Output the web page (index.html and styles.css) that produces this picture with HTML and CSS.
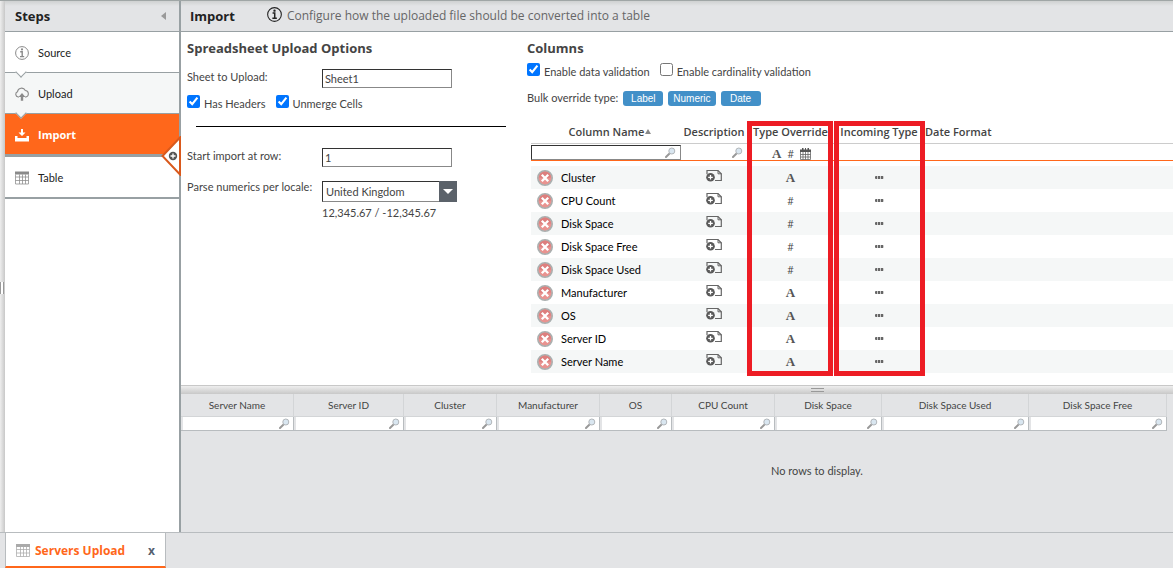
FILE: index.html
```
<!DOCTYPE html>
<html lang="en">
<head>
  <meta charset="UTF-8">
  <title>Servers Upload - Import</title>
  <meta name="viewport" content="width=device-width,initial-scale=1">
  <link rel="stylesheet" href="styles.css">
</head>
<body>
  <!-- shared icons -->
  <svg class="sprite" aria-hidden="true">
    <symbol id="i-info" viewBox="0 0 14 14">
      <circle cx="7" cy="7" r="6.4" fill="none" stroke="currentColor" stroke-width="1"/>
      <path d="M5.2 5.7H7.2V10.4M5 10.6H9.2" fill="none" stroke="currentColor" stroke-width="1.4"/>
      <circle cx="7" cy="3.4" r="1.1" fill="currentColor"/>
    </symbol>
    <symbol id="i-cloud" viewBox="0 0 14 14">
      <path d="M4 10H3.2A2.7 2.7 0 0 1 2.5 4.8A4.1 4.1 0 0 1 10.3 3.5A3.3 3.3 0 0 1 10.8 10H10" fill="none" stroke="currentColor" stroke-width="1.1"/>
      <path d="M7 6L10.4 10H8.2V13.8H5.8V10H3.6Z" fill="currentColor"/>
    </symbol>
    <symbol id="i-import" viewBox="0 0 14 14">
      <path d="M6 1H8V4.5H10.5L7 8L3.5 4.5H6Z" fill="currentColor"/>
      <path d="M0 8H2.5V10H11.5V8H14V13.5H0Z" fill="currentColor"/>
    </symbol>
    <symbol id="i-table" viewBox="0 0 14 13">
      <path d="M0 0H14V3H0Z" fill="currentColor"/>
      <path d="M.5 3V12.5H13.5V3M.5 5.5H13.5M.5 9H13.5M4.5 3V12.5M7.5 3V12.5M10.5 3V12.5" fill="none" stroke="currentColor" stroke-width="1" opacity=".75"/>
    </symbol>
    <symbol id="i-search" viewBox="0 0 11 11">
      <path d="M1 10L4.8 6.3" stroke="#999" stroke-width="2" stroke-linecap="round"/>
      <circle cx="6.8" cy="4" r="3" fill="#d9e6f0" stroke="#b2b6ba" stroke-width="1"/>
    </symbol>
    <symbol id="i-remove" viewBox="0 0 16 16">
      <circle cx="8" cy="8" r="7.2" fill="#e99390" stroke="#aab0b0" stroke-width="1.6"/>
      <path d="M2 7.5A6 6 0 0 1 14 7.5Q8 9 2 7.5Z" fill="#dd7f7e"/>
      <path d="M4.8 4.8L11.2 11.2M11.2 4.8L4.8 11.2" stroke="#fff" stroke-width="2.3"/>
    </symbol>
    <symbol id="i-note" viewBox="0 0 16 13">
      <path d="M1 5V1.5H12L15.3 4.8V11.5H9" fill="none" stroke="#666" stroke-width="1.2"/>
      <path d="M12 1.5V4.8H15.3" fill="none" stroke="#666" stroke-width="1"/>
      <circle cx="4.5" cy="8.3" r="4.3" fill="#5a5a5a"/>
      <path d="M2.2 8.3H6.8M4.5 6V10.6" stroke="#fff" stroke-width="1.3"/>
    </symbol>
    <symbol id="i-calendar" viewBox="0 0 11 12">
      <path d="M0 1.5H11V4H0ZM2 0H3.5V3H2ZM5 0H6V3H5ZM7.5 0H9V3H7.5Z" fill="#555"/>
      <path d="M.5 4V11.5H10.5V4M.5 6.5H10.5M.5 9H10.5M3 4V11.5M5.5 4V11.5M8 4V11.5" fill="none" stroke="#666" stroke-width=".8"/>
    </symbol>
  </svg>

  <div class="workspace">
    <div class="gutter"><span class="gutter-grip"></span></div>

    <nav class="steps">
      <div class="bar steps-bar">
        <h2>Steps</h2>
        <button class="collapse" aria-label="Collapse steps"></button>
      </div>
      <a class="step notched" href="#source"><svg><use href="#i-info"/></svg>Source</a>
      <a class="step notched visited" href="#upload"><svg><use href="#i-cloud"/></svg>Upload</a>
      <a class="step active" href="#import"><svg><use href="#i-import"/></svg>Import
        <svg class="add-step" viewBox="0 0 20 40">
          <path d="M19 1.5L1.5 20L19 38.5Z" fill="#fff" stroke="#d9591c" stroke-width="2"/>
          <circle cx="12" cy="20" r="4.2" fill="#555"/>
          <path d="M9.5 20H14.5M12 17.5V22.5" stroke="#fff" stroke-width="1.3"/>
        </svg>
      </a>
      <a class="step last" href="#table"><svg><use href="#i-table"/></svg>Table</a>
    </nav>

    <main class="main">
      <header class="bar main-bar">
        <h1>Import</h1>
        <svg class="info"><use href="#i-info"/></svg>
        <p>Configure how the uploaded file should be converted into a table</p>
      </header>

      <div class="panels">
        <section class="options">
          <h3>Spreadsheet Upload Options</h3>
          <div class="field">
            <label for="sheet">Sheet to Upload:</label>
            <input type="text" id="sheet" value="Sheet1">
          </div>
          <div class="checks">
            <input type="checkbox" id="headers" checked><label for="headers">Has Headers</label>
            <input type="checkbox" id="unmerge" checked><label for="unmerge">Unmerge Cells</label>
          </div>
          <hr>
          <div class="field">
            <label for="startRow">Start import at row:</label>
            <input type="text" id="startRow" value="1">
          </div>
          <div class="field locale">
            <label for="locale">Parse numerics per locale:</label>
            <div class="select-box">
              <select id="locale">
                <option>United Kingdom</option>
                <option>United States</option>
              </select>
            </div>
            <p class="sample">12,345.67 / -12,345.67</p>
          </div>
        </section>

        <section class="columns">
          <h3>Columns</h3>
          <div class="checks">
            <input type="checkbox" id="dataVal" checked><label for="dataVal">Enable data validation</label>
            <input type="checkbox" id="cardVal"><label for="cardVal">Enable cardinality validation</label>
          </div>
          <div class="bulk">
            <span>Bulk override type:</span>
            <button>Label</button>
            <button>Numeric</button>
            <button>Date</button>
          </div>

          <div class="table-wrap">
            <table class="column-table">
              <colgroup><col class="c-name"><col class="c-desc"><col class="c-type"><col class="c-incoming"><col></colgroup>
              <thead>
                <tr>
                  <th>Column Name<span class="sort-asc"></span></th>
                  <th>Description</th>
                  <th>Type Override</th>
                  <th>Incoming Type</th>
                  <th class="left">Date Format</th>
                </tr>
                <tr class="filters">
                  <td><div class="filter focus"><input type="text" aria-label="Filter column name"><svg><use href="#i-search"/></svg></div></td>
                  <td><div class="filter"><input type="text" aria-label="Filter description"><svg><use href="#i-search"/></svg></div></td>
                  <td><div class="types"><b>A</b><i>#</i><svg><use href="#i-calendar"/></svg></div></td>
                  <td></td>
                  <td></td>
                </tr>
              </thead>
              <tbody>
                <tr class="spacer"><td colspan="5"></td></tr>
                <tr><td><div class="name"><svg><use href="#i-remove"/></svg>Cluster</div></td><td><svg class="note"><use href="#i-note"/></svg></td><td><b>A</b></td><td class="dots"><span></span></td><td></td></tr>
                <tr><td><div class="name"><svg><use href="#i-remove"/></svg>CPU Count</div></td><td><svg class="note"><use href="#i-note"/></svg></td><td><i>#</i></td><td class="dots"><span></span></td><td></td></tr>
                <tr><td><div class="name"><svg><use href="#i-remove"/></svg>Disk Space</div></td><td><svg class="note"><use href="#i-note"/></svg></td><td><i>#</i></td><td class="dots"><span></span></td><td></td></tr>
                <tr><td><div class="name"><svg><use href="#i-remove"/></svg>Disk Space Free</div></td><td><svg class="note"><use href="#i-note"/></svg></td><td><i>#</i></td><td class="dots"><span></span></td><td></td></tr>
                <tr><td><div class="name"><svg><use href="#i-remove"/></svg>Disk Space Used</div></td><td><svg class="note"><use href="#i-note"/></svg></td><td><i>#</i></td><td class="dots"><span></span></td><td></td></tr>
                <tr><td><div class="name"><svg><use href="#i-remove"/></svg>Manufacturer</div></td><td><svg class="note"><use href="#i-note"/></svg></td><td><b>A</b></td><td class="dots"><span></span></td><td></td></tr>
                <tr><td><div class="name"><svg><use href="#i-remove"/></svg>OS</div></td><td><svg class="note"><use href="#i-note"/></svg></td><td><b>A</b></td><td class="dots"><span></span></td><td></td></tr>
                <tr><td><div class="name"><svg><use href="#i-remove"/></svg>Server ID</div></td><td><svg class="note"><use href="#i-note"/></svg></td><td><b>A</b></td><td class="dots"><span></span></td><td></td></tr>
                <tr><td><div class="name"><svg><use href="#i-remove"/></svg>Server Name</div></td><td><svg class="note"><use href="#i-note"/></svg></td><td><b>A</b></td><td class="dots"><span></span></td><td></td></tr>
              </tbody>
            </table>
            <div class="mark mark-type"></div>
            <div class="mark mark-incoming"></div>
          </div>
        </section>
      </div>

      <div class="splitter"><span></span></div>

      <section class="preview">
        <table class="preview-table">
          <colgroup><col class="w113"><col class="w110"><col class="w93"><col class="w103"><col class="w72"><col class="w103"><col class="w107"><col class="w147"><col class="w138"></colgroup>
          <thead>
            <tr>
              <th>Server Name</th>
              <th>Server ID</th>
              <th>Cluster</th>
              <th>Manufacturer</th>
              <th>OS</th>
              <th>CPU Count</th>
              <th>Disk Space</th>
              <th>Disk Space Used</th>
              <th>Disk Space Free</th>
            </tr>
            <tr>
              <td><div class="filter"><input type="text" aria-label="Filter Server Name"><svg><use href="#i-search"/></svg></div></td>
              <td><div class="filter"><input type="text" aria-label="Filter Server ID"><svg><use href="#i-search"/></svg></div></td>
              <td><div class="filter"><input type="text" aria-label="Filter Cluster"><svg><use href="#i-search"/></svg></div></td>
              <td><div class="filter"><input type="text" aria-label="Filter Manufacturer"><svg><use href="#i-search"/></svg></div></td>
              <td><div class="filter"><input type="text" aria-label="Filter OS"><svg><use href="#i-search"/></svg></div></td>
              <td><div class="filter"><input type="text" aria-label="Filter CPU Count"><svg><use href="#i-search"/></svg></div></td>
              <td><div class="filter"><input type="text" aria-label="Filter Disk Space"><svg><use href="#i-search"/></svg></div></td>
              <td><div class="filter"><input type="text" aria-label="Filter Disk Space Used"><svg><use href="#i-search"/></svg></div></td>
              <td><div class="filter"><input type="text" aria-label="Filter Disk Space Free"><svg><use href="#i-search"/></svg></div></td>
            </tr>
          </thead>
        </table>
        <p class="empty">No rows to display.</p>
      </section>
    </main>
  </div>

  <footer class="tabs">
    <div class="tab">
      <svg><use href="#i-table"/></svg>
      <a href="#servers-upload">Servers Upload</a>
      <button aria-label="Close tab">x</button>
    </div>
  </footer>
</body>
</html>
```
FILE: styles.css
```
*{box-sizing:border-box}
body{margin:0;min-height:100vh;display:flex;flex-direction:column;background:#fff;
  font-family:Lato,"Open Sans",sans-serif;font-size:11px;line-height:16px;color:#444}
h1,h2,h3,p{margin:0}
h1,h2,h3,th,.main-bar,.tab,.active{font-family:"Open Sans","Noto Sans",sans-serif}
h1,h2{font-size:13px;color:#222}
h3{font-size:13px;line-height:20px;color:#444}
a{color:inherit;text-decoration:none}
button,input,select{font:inherit;color:inherit}
svg{display:block;flex:none}
.sprite{position:absolute;width:0;height:0}

.workspace{flex:1;display:flex;border-top:1px solid #a0a6a6}
.gutter{width:5px;padding-top:42px;display:flex;align-items:center;background:linear-gradient(90deg,#eee,#c8c8c8)}
.gutter-grip{width:4px;height:12px;border:solid #999;border-width:0 1px;background:#fff}
.bar{display:flex;align-items:center;height:31px;border-bottom:1px solid #98a0a3;
  background:linear-gradient(#cfd1d1,#e3e4e6 5px)}

/* steps */
.steps{width:176px;border-right:2px solid #98a0a3}
.steps-bar{justify-content:space-between;padding:0 13px 0 10px}
.collapse{width:5px;height:8px;padding:0;border:solid transparent;border-width:4px 5px 4px 0;
  border-right-color:#999;background:none}
.step{position:relative;display:flex;align-items:center;height:41px;padding:2px 0 0 10px;gap:9px;
  border-bottom:1px solid #98a0a3;color:#222}
.step svg{width:14px;height:14px;color:#8a8a8a}
.notched{z-index:2}
.visited{z-index:1;background:#f5f7f7}
.notched::after{content:"";position:absolute;left:12px;bottom:-4px;width:7px;height:7px;
  border:solid #98a0a3;border-width:0 1px 1px 0;background:#fff;transform:rotate(45deg)}
.visited::after{background:#f5f7f7}
.active{height:43px;border-bottom-width:3px;background:#ff671b;color:#fff;font-weight:bold}
.active svg{color:#fff}
.step .add-step{position:absolute;right:-2px;top:22px;width:20px;height:40px;z-index:1}
.last{height:42px;border-bottom-width:2px}

/* main area */
.main{flex:1;min-width:0;display:flex;flex-direction:column}
.main-bar{padding-left:9px}
.main-bar p{margin-left:5px;font-size:12px;color:#666}
.info{width:15px;height:15px;margin:-3px 0 0 32px;color:#222}
.panels{display:flex;padding:6px 0 12px 6px}
.options{width:340px}
.columns{flex:1;min-width:0}
.field{display:grid;grid-template-columns:135px 135px;align-items:center;margin-top:11px}
.field label{margin-top:-3px}
.field input{width:130px;height:19px;padding:0 2px;border:1px solid #888;
  border-top-color:#333;border-left-color:#333}
.checks{display:flex;align-items:center;height:18px;margin-top:5px}
.checks input{width:13px;height:13px;margin:0 4px 5px 0}
.checks label{margin-right:10px}
.options .checks{margin-top:7px}
hr{margin:13px 21px 21px 9px;border:0;border-top:1px solid #000}
.locale{margin-top:14px;row-gap:3px}
.locale label{margin-top:-9px}
.sample{grid-column:2}
.select-box{position:relative}
.select-box::before{content:"";position:absolute;right:0;top:0;width:18px;height:21px;background:#5b626a;pointer-events:none}
.select-box::after{content:"";position:absolute;right:4px;top:8px;border:solid transparent;
  border-width:5px 5px 0;border-top-color:#fff;pointer-events:none}
.select-box select{display:block;width:100%;height:21px;padding:1px 3px 0;border:1px solid #888;
  border-top-color:#333;border-left-color:#333;border-radius:0;background:#fff;appearance:none}
.bulk{display:flex;align-items:center;gap:5px;height:16px;margin-top:9px}
.bulk button{min-width:40px;height:15px;padding:0 5px;border:0;border-radius:3px;background:#4290c8;
  color:#fff;font:10px/15px "Liberation Sans",Arial,sans-serif}

/* column settings table */
.table-wrap{position:relative;margin:15px 0 0 4px}
table{width:100%;border-collapse:separate;border-spacing:0;table-layout:fixed}
th,td{padding:0}
.c-name{width:150px}
.c-desc{width:66px}
.c-type{width:87px}
.c-incoming{width:90px}
.column-table th{height:23px;border-bottom:1px solid #ccc;color:#444;font-weight:600;white-space:nowrap}
.column-table .left{padding-left:1px;text-align:left}
.column-table th:first-child{padding-left:8px}
.sort-asc{display:inline-block;margin-left:1px;border:solid transparent;border-width:0 3px 5px;
  border-bottom-color:#888;vertical-align:2px}
.filters td{height:17px;border-bottom:1px solid #ff671b}
.filter{display:flex;align-items:center;height:15px;padding-right:4px;background:#fff}
.filter input{flex:1;min-width:0;height:13px;padding:0 2px;border:0;outline:0;background:none}
.filter svg{width:11px;height:11px}
.focus{border:1px solid #888;border-top-color:#333;border-left-color:#333}
.column-table td{text-align:center;height:23px}
.column-table .filters td{height:17px}
.column-table .spacer td{height:5px}
.column-table tbody tr:nth-child(even){background:#f5f7f7}
.column-table b{font:bold 13px/16px "Liberation Serif",serif;color:#555}
.column-table i{font:10px/16px "Open Sans",sans-serif}
.types{display:flex;align-items:center;justify-content:center;gap:6px;height:16px;padding:3px 0 0 2px}
.types svg{width:11px;height:12px}
.name{display:flex;align-items:center;gap:8px;padding-left:6px;color:#000}
.name svg{width:16px;height:16px;margin-top:1px}
.note{width:16px;height:13px;margin:0 auto 5px}
.dots span{display:block;width:9px;height:3px;margin:auto;border-radius:1px;
  background:repeating-linear-gradient(90deg,#666 0 2px,#ccc 2px 3px)}
.mark{position:absolute;top:0;bottom:-3px;border:5px solid #ed1c24}
.mark-type{left:216px;width:86px}
.mark-incoming{left:303px;width:91px}

/* preview */
.splitter{display:flex;align-items:center;justify-content:center;height:9px;padding-left:280px;border-top:1px solid #c8c8c8;
  background:linear-gradient(#eee,#c8c8c8)}
.splitter span{width:13px;height:4px;border:solid #999;border-width:1px 0}
.preview{flex:1;background:#e3e4e6}
.preview-table{width:986px}
.w113{width:113px}
.w110{width:110px}
.w93{width:93px}
.w103{width:103px}
.w72{width:72px}
.w107{width:107px}
.w147{width:147px}
.w138{width:138px}
.preview-table th{height:23px;border:solid #d3d5d7;border-width:0 1px 1px 0;font-family:Lato,sans-serif;font-weight:normal;font-size:10px}
.preview-table td{padding-left:2px;border:solid #b8bcbf;border-width:0 1px 1px 0}
.preview-table .filter{height:13px;padding-right:3px}
.empty{margin-top:32px;text-align:center;padding-left:280px}

/* bottom tabs */
.tabs{display:flex;height:36px;border-top:1px solid #b8bcbf;background:#e3e4e6;padding-left:5px}
.tab{display:flex;align-items:center;width:161px;padding:2px 10px 0;border:solid #b8bcbf;border-width:0 1px;
  border-bottom:2px solid #ff671b;background:#fff;color:#ff671b;font-weight:bold;font-size:12px}
.tab svg{width:14px;height:13px;margin-right:5px;color:#aaa}
.tab button{margin-left:auto;padding:0;border:0;background:none;color:#566070}
```
